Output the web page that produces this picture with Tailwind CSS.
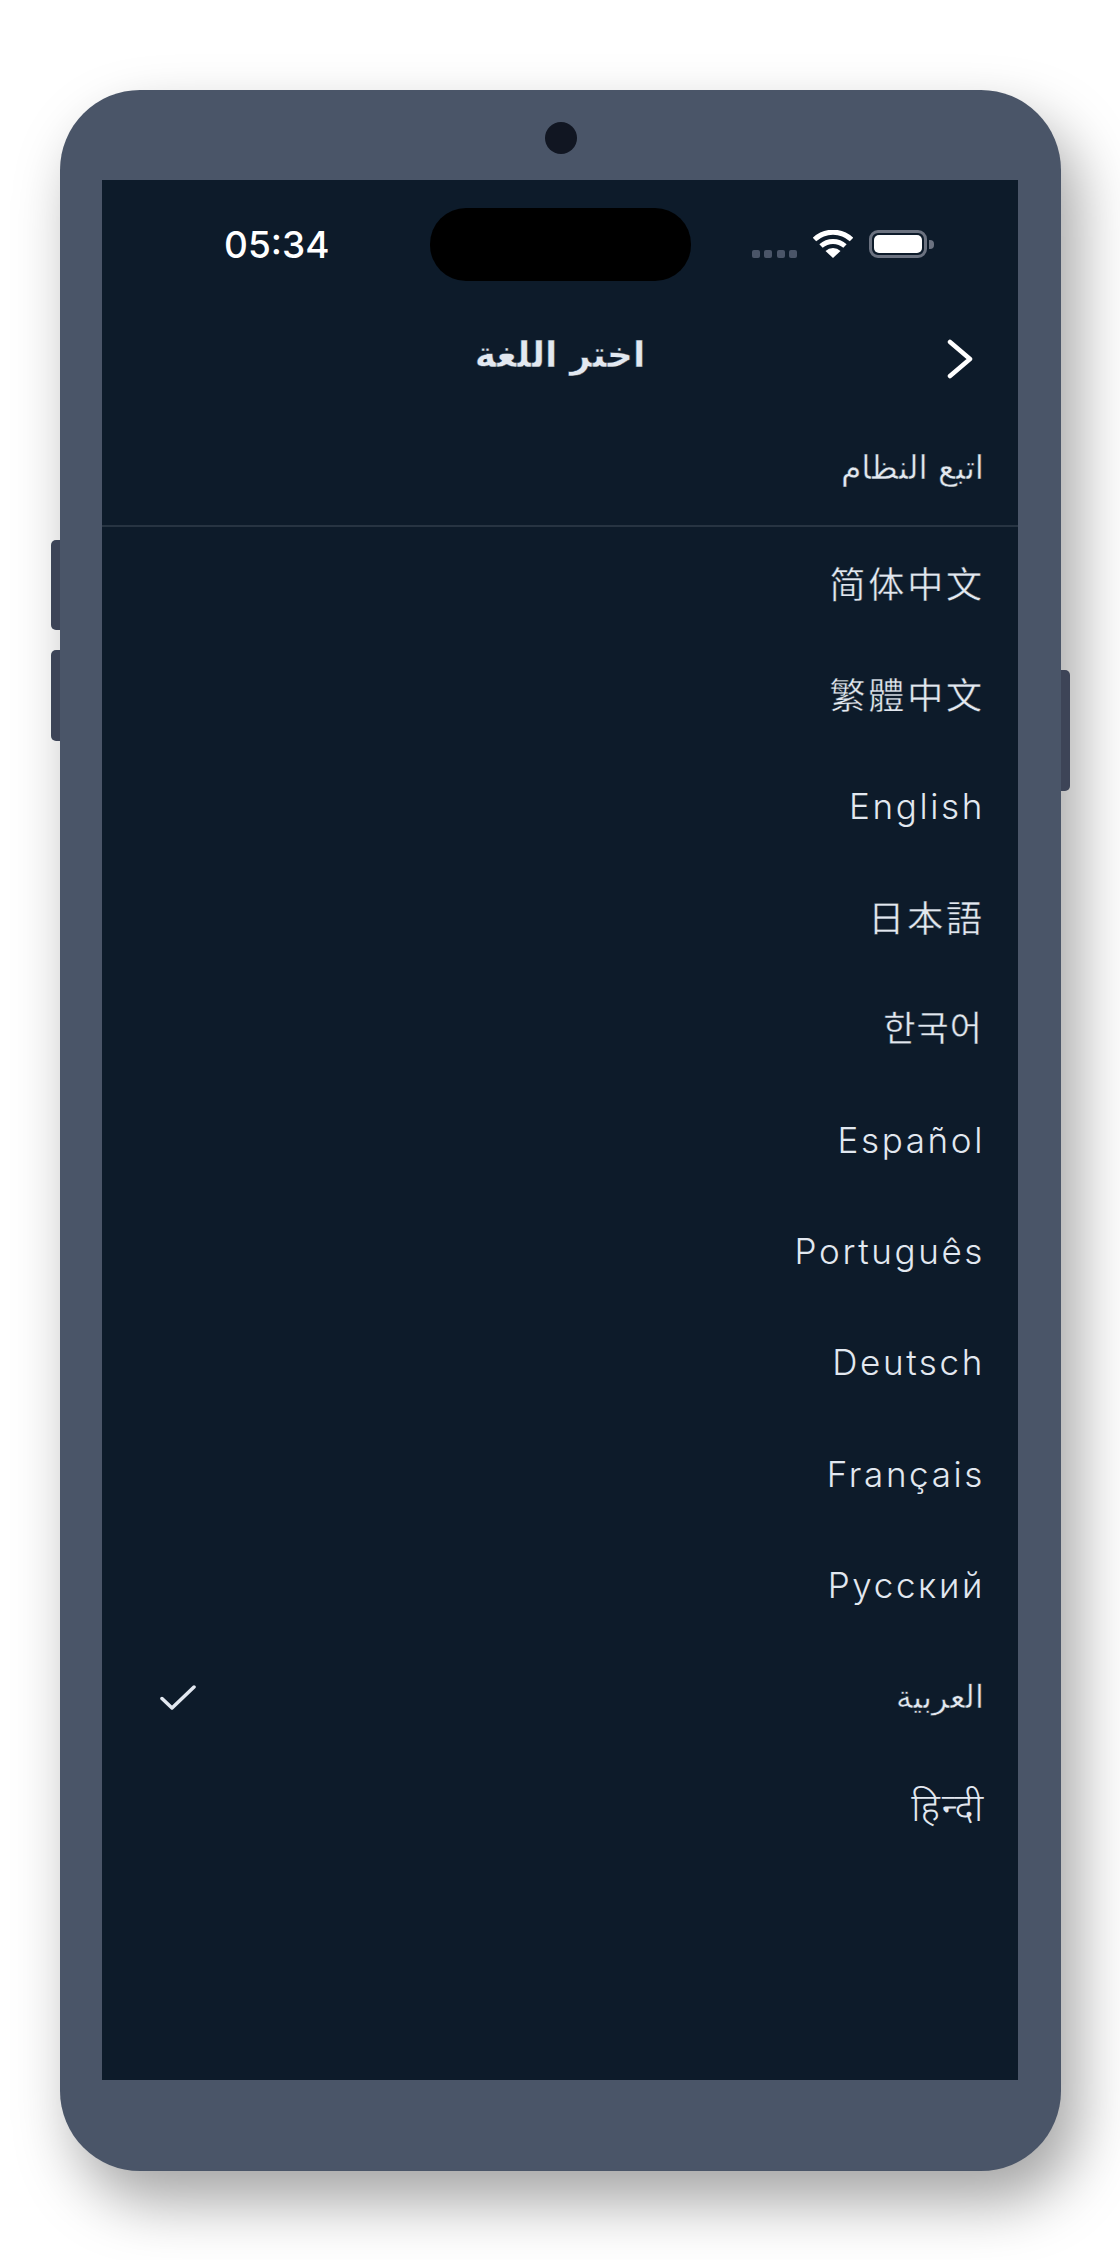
<!DOCTYPE html>
<html lang="ar">
<head>
  <meta charset="UTF-8" />
  <meta name="viewport" content="width=device-width, initial-scale=1.0" />
  <title>اختر اللغة</title>
  <script src="https://cdn.jsdelivr.net/npm/@tailwindcss/browser@4"></script>
</head>
<body class="bg-white overflow-hidden">
  <div class="w-[1120px] h-[2260px] pt-[90px] pl-[60px]">
    <!-- Phone frame -->
    <div class="relative w-[1001px] h-[2081px] pt-[90px] pl-[42px] rounded-[80px] bg-[#4a5568] shadow-[16px_30px_60px_rgba(0,0,0,0.36)]">
      <div class="absolute -left-[9px] top-[450px] w-[9px] h-[90px] rounded-l-[5px] bg-[#3d4457]"></div>
      <div class="absolute -left-[9px] top-[560px] w-[9px] h-[91px] rounded-l-[5px] bg-[#3d4457]"></div>
      <div class="absolute -right-[9px] top-[580px] w-[9px] h-[121px] rounded-r-[5px] bg-[#3d4457]"></div>
      <div class="absolute left-[485px] top-[32px] w-[32px] h-[32px] rounded-full bg-[#111622]"></div>

      <!-- Screen -->
      <div class="w-[916px] h-[1900px] pt-[28px] bg-[#0d1b2a] font-[Inter,'Noto_Sans',sans-serif]">
        <!-- Status bar -->
        <div class="grid grid-cols-[328px_261px_1fr] h-[73px] items-start">
          <div class="pl-[122px] pt-[15px] text-[37px] leading-[44px] font-medium text-white">05:34</div>
          <div class="h-[73px] rounded-[36px] bg-black"></div>
          <div class="flex items-start pl-[61px] pt-[22px]">
            <div class="flex gap-[4.3px] mt-[20px]">
              <span class="w-[8px] h-[8px] rounded-[2px] bg-[#4a5568]"></span>
              <span class="w-[8px] h-[8px] rounded-[2px] bg-[#4a5568]"></span>
              <span class="w-[8px] h-[8px] rounded-[2px] bg-[#4a5568]"></span>
              <span class="w-[8px] h-[8px] rounded-[2px] bg-[#4a5568]"></span>
            </div>
            <svg class="ml-[16px]" width="40" height="28" viewBox="0 0 40 28">
              <path d="M1.5 9.5 A27 27 0 0 1 38.5 9.5" fill="none" stroke="#fff" stroke-width="5" stroke-linecap="butt" />
              <path d="M8 16 A18 18 0 0 1 32 16" fill="none" stroke="#fff" stroke-width="5" />
              <path d="M20 28 L12.5 21 A11 11 0 0 1 27.5 21 Z" fill="#fff" />
            </svg>
            <div class="ml-[16px] flex items-center">
              <div class="w-[58px] h-[28px] p-[2px] rounded-[9px] border-[3px] border-[#6b7280]">
                <div class="w-full h-full rounded-[5px] bg-white"></div>
              </div>
              <div class="ml-[2px] w-[5px] h-[9px] rounded-r-[4px] bg-[#6b7280]"></div>
            </div>
          </div>
        </div>

        <!-- Header -->
        <div class="relative mt-[38px] h-[72px] flex items-center justify-center">
          <h1 dir="rtl" class="text-[36px] font-bold text-[#e2e8f0] [-webkit-text-stroke:0.4px_#0d1b2a] font-['DejaVu_Sans',sans-serif]">اختر اللغة</h1>
          <svg class="absolute left-[845px] top-[20px]" width="26" height="40" viewBox="0 0 26 40">
            <path d="M3 3 L23 20 L3 37" fill="none" stroke="#fff" stroke-width="4.5" stroke-linecap="round" stroke-linejoin="round" />
          </svg>
        </div>

        <!-- Follow system -->
        <div dir="rtl" class="h-[136px] pt-[20px] pr-[34px] border-b-2 border-[#273442] flex items-center text-[33px] text-[#e2e8f0] [-webkit-text-stroke:0.45px_#0d1b2a] font-['DejaVu_Sans',sans-serif]">اتبع النظام</div>

        <!-- Language list -->
        <ul class="mt-px text-[35px] tracking-[0.075em] text-[#e2e8f0] font-[350]">
          <li class="h-[111.3px] pb-[3px] pr-[33px] flex items-center justify-end text-[36px] tracking-[0.08em] font-normal [-webkit-text-stroke:0.4px_#0d1b2a] font-['Noto_Sans_CJK_SC',sans-serif]">简体中文</li>
          <li class="h-[111.3px] pb-[3px] pr-[33px] flex items-center justify-end text-[36px] tracking-[0.08em] font-normal [-webkit-text-stroke:0.4px_#0d1b2a] font-['Noto_Sans_CJK_TC',sans-serif]">繁體中文</li>
          <li class="h-[111.3px] pr-[33px] flex items-center justify-end">English</li>
          <li class="h-[111.3px] pb-[3px] pr-[33px] flex items-center justify-end text-[36px] tracking-[0.08em] font-normal [-webkit-text-stroke:0.4px_#0d1b2a] font-['Noto_Sans_CJK_JP',sans-serif]">日本語</li>
          <li class="h-[111.3px] pb-[5px] pr-[35px] flex items-center justify-end tracking-[0.03em] font-normal [-webkit-text-stroke:0.4px_#0d1b2a] font-['Noto_Sans_CJK_KR',sans-serif]">한국어</li>
          <li class="h-[111.3px] pr-[33px] flex items-center justify-end">Español</li>
          <li class="h-[111.3px] pr-[33px] flex items-center justify-end">Português</li>
          <li class="h-[111.3px] pr-[33px] flex items-center justify-end">Deutsch</li>
          <li class="h-[111.3px] pr-[33px] flex items-center justify-end">Français</li>
          <li class="h-[111.3px] pr-[33px] flex items-center justify-end">Русский</li>
          <li class="h-[111.3px] pr-[34px] pl-[58px] flex items-center justify-between">
            <svg class="mt-[2px]" width="36" height="26" viewBox="0 0 36 26">
              <path d="M2 13.5 L12 23 L34 2" fill="none" stroke="#e2e8f0" stroke-width="3.5" stroke-linecap="round" stroke-linejoin="round" />
            </svg>
            <span dir="rtl" class="text-[32px] tracking-normal [-webkit-text-stroke:0.45px_#0d1b2a] font-['DejaVu_Sans',sans-serif]">العربية</span>
          </li>
          <li class="h-[111.3px] pr-[33px] flex items-center justify-end text-[38px] tracking-[0.05em]">हिन्दी</li>
        </ul>
      </div>
    </div>
  </div>
</body>
</html>
